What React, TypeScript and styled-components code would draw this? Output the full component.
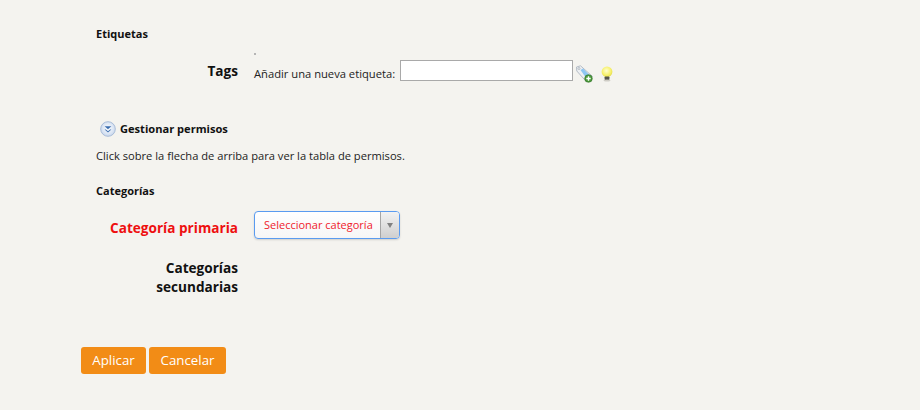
import * as React from "react";
import styled, { createGlobalStyle } from "styled-components";

const GlobalStyle = createGlobalStyle`
  html, body {
    margin: 0;
    padding: 0;
    background: #f4f3ef;
    font-family: "Open Sans", sans-serif;
    color: #111;
  }
`;

const Page = styled.div`
  width: 920px;
  height: 410px;
  box-sizing: border-box;
  padding: 26px 0 0 81px;
  overflow: hidden;
`;

const Content = styled.div`
  padding-left: 15px;
`;

const SectionTitle = styled.h3<{ $top?: number }>`
  margin: ${p => p.$top ?? 0}px 0 0;
  font-size: 11px;
  line-height: 15px;
  font-weight: 700;
  color: #111;
`;

const FieldRow = styled.div<{ $top: number }>`
  display: grid;
  grid-template-columns: 142px 1fr;
  column-gap: 16px;
  margin-top: ${p => p.$top}px;
`;

const FieldLabel = styled.label<{ $required?: boolean; $offset?: number }>`
  padding-top: ${p => p.$offset ?? 0}px;
  text-align: right;
  font-size: 13.6px;
  line-height: 19px;
  font-weight: 700;
  color: ${p => (p.$required ? "#ee0f0f" : "#111")};
`;

const TagValue = styled.div`
  display: flex;
  flex-direction: column;
`;

const Dot = styled.span`
  width: 2px;
  height: 2px;
  background: #b5b5b5;
  margin: 1px 0 5px;
`;

const TagLine = styled.div`
  display: flex;
  align-items: center;
  height: 21px;
`;

const TagText = styled.span`
  font-size: 11.2px;
  color: #222;
  margin-right: 5px;
  position: relative;
  top: 3px;
`;

const TagInput = styled.input`
  width: 173px;
  height: 21px;
  box-sizing: border-box;
  border: 1px solid #a9a9a9;
  background: #fff;
  padding: 0 4px;
  margin: 0 3px 0 0;
`;

const IconSlot = styled.span<{ $gap?: number }>`
  display: inline-flex;
  margin-left: ${p => p.$gap ?? 0}px;
  position: relative;
  top: 3px;
`;

const PermissionsRow = styled.div`
  display: flex;
  align-items: flex-start;
  gap: 4px;
  margin: 0 0 0 4px;
  height: 16px;
`;

const PermissionsGap = styled.div`
  height: 40px;
`;

const PermissionsTitle = styled.span`
  font-size: 11.1px;
  line-height: 15px;
  font-weight: 700;
  color: #111;
`;

const Hint = styled.p`
  margin: 11px 0 0;
  font-size: 11.15px;
  line-height: 15px;
  color: #222;
`;

const SelectBox = styled.div`
  display: flex;
  width: 146px;
  height: 28px;
  box-sizing: border-box;
  border: 1px solid #5a9bf0;
  border-radius: 4px;
  background: linear-gradient(#ffffff, #f6f6f6);
  box-shadow: 0 1px 2px rgba(0, 0, 0, 0.15);
  overflow: hidden;
`;

const SelectText = styled.span`
  flex: 1;
  font-size: 11px;
  line-height: 26px;
  padding-left: 9px;
  color: #f0222c;
  white-space: nowrap;
`;

const SelectArrow = styled.span`
  width: 18px;
  display: flex;
  align-items: center;
  justify-content: center;
  border-left: 1px solid #a5a5a5;
  background: linear-gradient(#f2f2f2, #cfcfcf);

  &::after {
    content: "";
    border-left: 3px solid transparent;
    border-right: 3px solid transparent;
    border-top: 5px solid #808080;
  }
`;

const Actions = styled.div`
  display: flex;
  gap: 3px;
  margin-top: 51px;
`;

const ActionButton = styled.button<{ $width: number }>`
  width: ${p => p.$width}px;
  height: 27px;
  padding: 0;
  border: 0;
  border-radius: 3px;
  background: #f28c16;
  color: #fff;
  font-family: inherit;
  font-size: 13.3px;
  line-height: 27px;
`;

const TagAddIcon = () => (
  <svg width="18" height="18" viewBox="0 0 18 18">
    <path d="M0.5 2 L4.5 0.8 L16.5 11.5 L10.5 16.8 L0.8 6 Z" fill="#eef0f3" stroke="#b4bcc6" strokeWidth="1" />
    <path d="M4.5 5 L7 3.6 L14 10.5 L10.5 13.5 Z" fill="#8ec6f2" />
    <circle cx="3" cy="3.5" r="1" fill="#fff" stroke="#8a96a2" strokeWidth="0.6" />
    <circle cx="12.5" cy="13.5" r="3.8" fill="#4b9a3a" stroke="#2f6e25" strokeWidth="0.6" />
    <path d="M12.5 11.3 V15.7 M10.3 13.5 H14.7" stroke="#fff" strokeWidth="1.4" />
  </svg>
);

const BulbIcon = () => (
  <svg width="14" height="16" viewBox="0 0 14 16">
    <defs>
      <radialGradient id="bulbGlow" cx="45%" cy="40%" r="60%">
        <stop offset="0%" stopColor="#fffed0" />
        <stop offset="70%" stopColor="#f6f06a" />
        <stop offset="100%" stopColor="#e4dc50" />
      </radialGradient>
    </defs>
    <circle cx="7" cy="5.8" r="5.4" fill="url(#bulbGlow)" />
    <rect x="4.6" y="10.5" width="4.8" height="3.6" rx="0.8" fill="#55554c" />
    <ellipse cx="7" cy="14.6" rx="3.4" ry="1" fill="#cfcdc6" />
  </svg>
);

const ExpandIcon = () => (
  <svg width="16" height="16" viewBox="0 0 16 16">
    <defs>
      <radialGradient id="expandFill" cx="50%" cy="45%" r="55%">
        <stop offset="0%" stopColor="#ffffff" />
        <stop offset="100%" stopColor="#c9d8ee" />
      </radialGradient>
    </defs>
    <circle cx="8" cy="8" r="7.3" fill="url(#expandFill)" stroke="#a9bcd8" strokeWidth="1" />
    <path d="M4.6 5.2 H11.4 L8 8.2 Z" fill="#3a6cae" />
    <path d="M4.6 8.6 L8 11.6 L11.4 8.6 L10.2 8.6 L8 10.2 L5.8 8.6 Z" fill="#3a6cae" />
  </svg>
);

const App: React.FC = () => {
  return (
    <Page>
      <GlobalStyle />
      <Content>
        <SectionTitle>Etiquetas</SectionTitle>
        <FieldRow $top={11}>
          <FieldLabel $offset={9}>Tags</FieldLabel>
          <TagValue>
            <Dot />
            <TagLine>
              <TagText>Añadir una nueva etiqueta:</TagText>
              <TagInput type="text" />
              <IconSlot><TagAddIcon /></IconSlot>
              <IconSlot $gap={6}><BulbIcon /></IconSlot>
            </TagLine>
          </TagValue>
        </FieldRow>
        <PermissionsGap />
        <PermissionsRow>
          <ExpandIcon />
          <PermissionsTitle>Gestionar permisos</PermissionsTitle>
        </PermissionsRow>
        <Hint>Click sobre la flecha de arriba para ver la tabla de permisos.</Hint>
        <SectionTitle $top={20}>Categorías</SectionTitle>
        <FieldRow $top={13}>
          <FieldLabel $required $offset={7}>Categoría primaria</FieldLabel>
          <SelectBox>
            <SelectText>Seleccionar categoría</SelectText>
            <SelectArrow />
          </SelectBox>
        </FieldRow>
        <FieldRow $top={19}>
          <FieldLabel>Categorías secundarias</FieldLabel>
        </FieldRow>
      </Content>
      <Actions>
        <ActionButton $width={65}>Aplicar</ActionButton>
        <ActionButton $width={77}>Cancelar</ActionButton>
      </Actions>
    </Page>
  );
};

export default App;
